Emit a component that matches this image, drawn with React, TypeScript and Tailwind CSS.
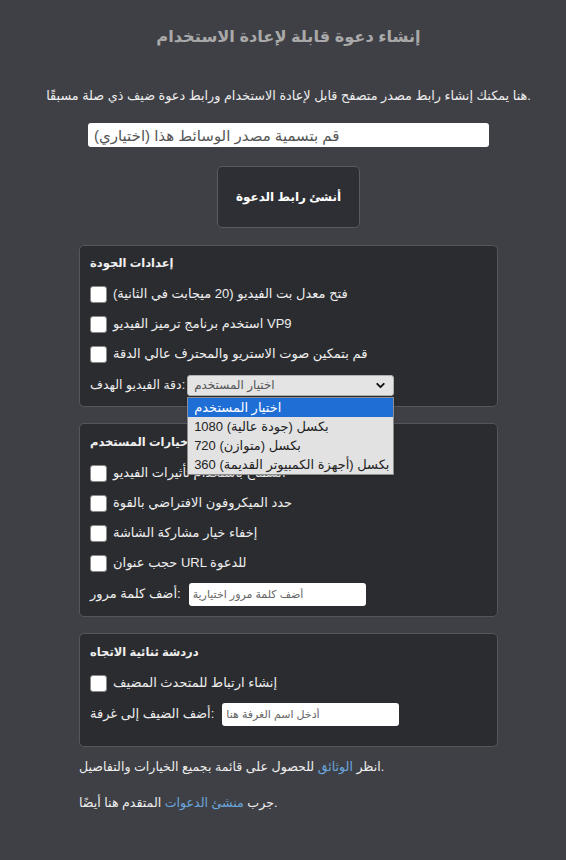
import { ChevronDown } from "lucide-react";

const font = "font-['Liberation_Sans','DejaVu_Sans',sans-serif]";

function Check({ label }: { label: string }) {
  return (
    <label className="h-[30px] flex items-center gap-[6px] text-[13px] text-[#eeeeee]">
      <input
        type="checkbox"
        className="appearance-none w-[17px] h-[17px] rounded-[3px] bg-white border border-[#8a8a8a] shrink-0"
      />
      <span className="whitespace-nowrap">{label}</span>
    </label>
  );
}

function Box({ title, className, children }: { title: string; className: string; children: React.ReactNode }) {
  return (
    <div className={`relative border border-[#55565b] rounded-[5px] bg-[#2b2c30] px-[10px] ${className}`}>
      <div className="h-[18px] flex items-center text-[11.5px] font-bold text-[#f0f0f0]">{title}</div>
      <div className="mt-[6px]">{children}</div>
    </div>
  );
}

const options = [
  "اختيار المستخدم",
  "1080 بكسل (جودة عالية)",
  "720 بكسل (متوازن)",
  "360 بكسل (أجهزة الكمبيوتر القديمة)",
];

export default function App() {
  return (
    <div className={`${font} min-h-screen h-[860px] bg-[#3f4045] text-[#eeeeee]`}>
      {/* header */}
      <div className="ml-[11px] text-center pt-[24px]">
        <h1 className="text-[16.2px] leading-[24px] font-bold text-[#a9a9a9]">إنشاء دعوة قابلة لإعادة الاستخدام</h1>
        <p className="mt-[38px] text-[12.8px] leading-[20px] whitespace-nowrap">
          هنا يمكنك إنشاء رابط مصدر متصفح قابل لإعادة الاستخدام ورابط دعوة ضيف ذي صلة مسبقًا.
        </p>
        <div className="mt-[17px] flex justify-center">
          <input
            type="text"
            placeholder="قم بتسمية مصدر الوسائط هذا (اختياري)"
            className="w-[401px] h-[24px] rounded-[3px] bg-white px-[6px] text-[15px] text-[#333] placeholder:text-[#555] outline-none"
          />
        </div>
        <div className="mt-[19px] flex justify-center">
          <button className="w-[143px] h-[62px] rounded-[5px] border border-[#5a5b60] bg-[#2e2f34] text-[12px] font-bold text-white whitespace-nowrap">
            أنشئ رابط الدعوة
          </button>
        </div>
      </div>

      <div className="ml-[79px] w-[419px] mt-[17px]">
        <Box title="إعدادات الجودة" className="pt-[9px] pb-[5px] z-10">
          <Check label="فتح معدل بت الفيديو (20 ميجابت في الثانية)" />
          <Check label="استخدم برنامج ترميز الفيديو VP9" />
          <Check label="قم بتمكين صوت الاستريو والمحترف عالي الدقة" />
          <div className="h-[32px] flex items-center gap-[2px] text-[12.5px]">
            <span className="whitespace-nowrap">دقة الفيديو الهدف:</span>
            <div className="relative">
              <div className="w-[207px] h-[21px] rounded-[3px] bg-[#e4e4e4] border border-[#b0b0b0] flex items-center justify-between pl-[6px] pr-[6px] text-[12px] text-[#555]">
                <span>اختيار المستخدم</span>
                <ChevronDown size={13} strokeWidth={3.5} className="text-[#111]" />
              </div>
              <ul className="absolute left-0 top-[22px] w-[207px] bg-[#e2e2e2] border border-[#8e8e8e] text-[13px] text-[#222] shadow-sm">
                {options.map((o, i) => (
                  <li
                    key={i}
                    className={`h-[19px] leading-[19px] px-[6px] whitespace-nowrap ${i === 0 ? "bg-[#1f6ed6] text-white" : ""}`}
                  >
                    {o}
                  </li>
                ))}
              </ul>
            </div>
          </div>
        </Box>

        <Box title="خيارات المستخدم" className="mt-[16px] pt-[10px] pb-[6px]">
          <Check label="السماح باستخدام تأثيرات الفيديو" />
          <Check label="حدد الميكروفون الافتراضي بالقوة" />
          <Check label="إخفاء خيار مشاركة الشاشة" />
          <Check label="حجب عنوان URL للدعوة" />
          <div className="h-[32px] flex items-center gap-[8px] text-[13px]">
            <span className="whitespace-nowrap">أضف كلمة مرور:</span>
            <input
              type="text"
              placeholder="أضف كلمة مرور اختيارية"
              className="w-[177px] h-[23px] rounded-[3px] bg-white px-[4px] text-[11px] text-[#333] placeholder:text-[#666] outline-none"
            />
          </div>
        </Box>

        <Box title="دردشة ثنائية الاتجاه" className="mt-[16px] pt-[10px] pb-[16px]">
          <Check label="إنشاء ارتباط للمتحدث المضيف" />
          <div className="h-[32px] flex items-center gap-[8px] text-[13px]">
            <span className="whitespace-nowrap">أضف الضيف إلى غرفة:</span>
            <input
              type="text"
              placeholder="أدخل اسم الغرفة هنا"
              className="w-[177px] h-[23px] rounded-[3px] bg-white px-[4px] text-[11px] text-[#333] placeholder:text-[#666] outline-none"
            />
          </div>
        </Box>

        <p className="mt-[10px] text-[12.6px] leading-[20px]">
          انظر <a className="text-[#6aa6dd]">الوثائق</a> للحصول على قائمة بجميع الخيارات والتفاصيل.
        </p>
        <p className="mt-[16px] text-[12.6px] leading-[20px]">
          جرب <a className="text-[#6aa6dd]">منشئ الدعوات</a> المتقدم هنا أيضًا.
        </p>
      </div>
    </div>
  );
}
